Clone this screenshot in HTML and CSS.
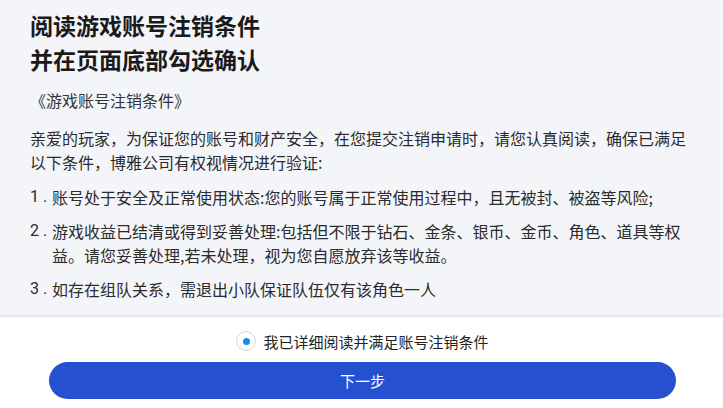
FILE: index.html
```html
<!DOCTYPE html>
<html lang="zh-CN">
<head>
    <meta charset="UTF-8">
    <meta name="viewport" content="width=device-width, initial-scale=1.0">
    <title>账号注销条件</title>
    <link rel="stylesheet" href="styles.css">
</head>
<body>
    <div class="page">
        <div class="content">
            <h1 class="title">阅读游戏账号注销条件<br>并在页面底部勾选确认</h1>
            <div class="subtitle">《游戏账号注销条件》</div>

            <p class="intro">亲爱的玩家，为保证您的账号和财产安全，在您提交注销申请时，请您认真阅读，确保已满足以下条件，博雅公司有权视情况进行验证:</p>

            <div class="item">
                <span class="num">1.</span>
                <span class="text">账号处于安全及正常使用状态:您的账号属于正常使用过程中，且无被封、被盗等风险;</span>
            </div>
            <div class="item">
                <span class="num">2.</span>
                <span class="text">游戏收益已结清或得到妥善处理:包括但不限于钻石、金条、银币、金币、角色、道具等权益。请您妥善处理,若未处理，视为您自愿放弃该等收益。</span>
            </div>
            <div class="item">
                <span class="num">3.</span>
                <span class="text">如存在组队关系，需退出小队保证队伍仅有该角色一人</span>
            </div>
        </div>

        <div class="footer">
            <label class="agree">
                <span class="radio"><span class="radio-dot"></span></span>
                <span>我已详细阅读并满足账号注销条件</span>
            </label>
            <button class="next-btn">下一步</button>
        </div>
    </div>
</body>
</html>
```

FILE: styles.css
```css
body {
    margin: 0;
    font-family: "Noto Sans CJK SC", "Noto Sans", sans-serif;
    color: #2b2b2b;
    background-color: #f4f5f9;
}
.page {
    display: flex;
    flex-direction: column;
    height: 100vh;
}
.content {
    flex: 1;
    padding: 8px 30px 0 30px;
    background-color: #f4f5f9;
}
.title {
    margin: 0;
    font-size: 23px;
    line-height: 34px;
    font-weight: bold;
    color: #1a1a1a;
}
.subtitle {
    margin-top: 12px;
    font-size: 16px;
    line-height: 24px;
    color: #333;
}
.intro {
    margin: 14px 0 11px 0;
    font-size: 16px;
    line-height: 24px;
}
.item {
    display: flex;
    font-size: 16px;
    line-height: 24px;
    margin-bottom: 10px;
}
.num {
    flex: none;
    width: 22px;
    font-family: Roboto, sans-serif;
    letter-spacing: 4px;
}
.text {
    flex: 1;
}
.footer {
    flex: none;
    height: 91px;
    box-sizing: border-box;
    padding: 14px 47px 9px 49px;
    background-color: white;
    box-shadow: 0 -1px 3px rgba(0,0,0,0.1);
    display: flex;
    flex-direction: column;
    gap: 11px;
}
.agree {
    display: flex;
    align-items: center;
    justify-content: center;
    gap: 7px;
    height: 20px;
    font-size: 15px;
    color: #222;
}
.radio {
    width: 20px;
    height: 20px;
    box-sizing: border-box;
    border: 1px solid #d6d6d6;
    border-radius: 50%;
    display: flex;
    align-items: center;
    justify-content: center;
}
.radio-dot {
    width: 7px;
    height: 7px;
    border-radius: 50%;
    background-color: #1a8cf0;
}
.next-btn {
    height: 37px;
    border: none;
    border-radius: 19px;
    background-color: #2550d0;
    color: white;
    font-family: inherit;
    font-size: 15px;
}
```
